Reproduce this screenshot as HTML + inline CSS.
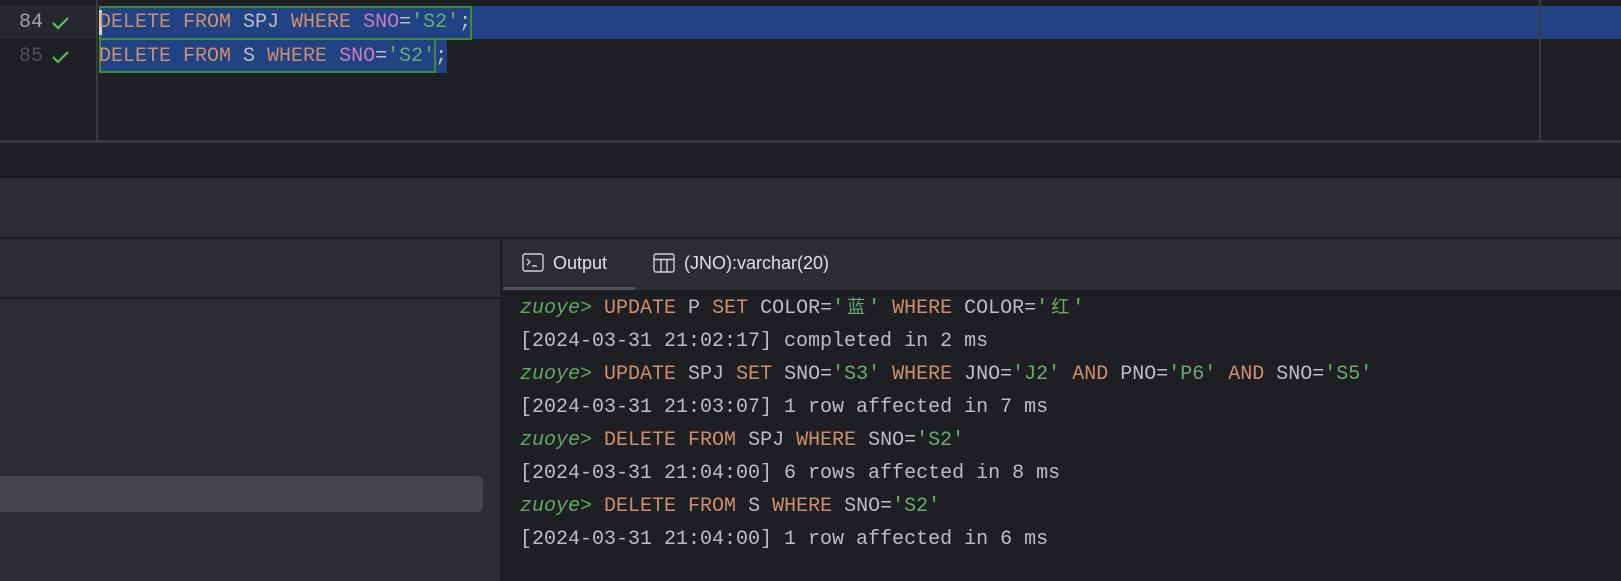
<!DOCTYPE html>
<html><head><meta charset="utf-8"><style>
*{margin:0;padding:0;box-sizing:border-box}
body{width:1621px;height:581px;background:#1e1f22;position:relative;overflow:hidden;font-family:"Liberation Mono",monospace}
.abs{position:absolute}
.m{font-family:"Liberation Mono","Noto Sans CJK SC",monospace;font-size:20px;white-space:pre;color:#bcbec4}
.k{color:#cf8e6d}.s{color:#6aab73}.p{color:#c77dbb}.g{color:#5fa866;font-style:italic}
.cj{display:inline-block;width:24px;text-align:center;font-family:"Noto Sans CJK SC",sans-serif;font-size:18px}
.sans{font-family:"Liberation Sans",sans-serif;font-size:18px;color:#dfe1e5}
</style></head><body>
<!-- editor -->
<div class="abs" style="left:0;top:6px;width:98px;height:33px;background:#26282e"></div>
<div class="abs" style="left:99px;top:6px;width:1522px;height:33px;background:#214283"></div>
<div class="abs" style="left:99px;top:39px;width:348px;height:34px;background:#214283"></div>
<div class="abs" style="left:99px;top:6px;width:373px;height:34px;border:2px solid #3f8a3a"></div>
<div class="abs" style="left:99px;top:39px;width:337px;height:34px;border:2px solid #3f8a3a;border-top:none"></div>
<div class="abs" style="left:96px;top:0;width:2px;height:143px;background:#393b40"></div>
<div class="abs" style="left:1539px;top:0;width:2px;height:143px;background:#393b40"></div>
<div class="abs" style="left:99px;top:10px;width:3px;height:25px;background:#ced0d6"></div>
<div class="abs m" style="left:19px;top:11px;color:#a1a3ab">84</div>
<div class="abs m" style="left:19px;top:45px;color:#4b5059">85</div>
<svg class="abs" style="left:51px;top:15px" width="19" height="52"><path d="M2 8l5 5L17 3M2 42l5 5L17 37" stroke="#5fb865" stroke-width="2.2" fill="none"/></svg>
<div class="abs m" style="left:99px;top:11px"><span class="k">DELETE FROM</span> SPJ <span class="k">WHERE</span> <span class="p">SNO</span>=<span class="s">'S2'</span>;</div>
<div class="abs m" style="left:99px;top:45px"><span class="k">DELETE FROM</span> S <span class="k">WHERE</span> <span class="p">SNO</span>=<span class="s">'S2'</span>;</div>
<div class="abs" style="left:0;top:140px;width:1621px;height:3px;background:#393b40"></div>
<!-- middle bar -->
<div class="abs" style="left:0;top:178px;width:1621px;height:59px;background:#2b2d30"></div>
<div class="abs" style="left:0;top:237px;width:1621px;height:2px;background:#1e1f22"></div>
<!-- left panel -->
<div class="abs" style="left:0;top:239px;width:502px;height:342px;background:#2b2d30"></div>
<div class="abs" style="left:0;top:297px;width:502px;height:2px;background:#1e1f22"></div>
<div class="abs" style="left:0;top:476px;width:483px;height:36px;background:#43454a;border-radius:0 6px 6px 0"></div>
<div class="abs" style="left:500px;top:239px;width:3px;height:342px;background:#1e1f22"></div>
<!-- output header -->
<div class="abs" style="left:503px;top:239px;width:1118px;height:51px;background:#2b2d30"></div>
<div class="abs" style="left:503px;top:287px;width:132px;height:3px;background:#4e5157"></div>
<svg class="abs" style="left:522px;top:253px" width="22" height="20"><rect x="1" y="1" width="20" height="17" rx="2" fill="none" stroke="#ced0d6" stroke-width="1.4"/><path d="M5 6l3 3-3 3M10 13h5" stroke="#ced0d6" stroke-width="1.4" fill="none"/></svg>
<div class="abs sans" style="left:553px;top:253px">Output</div>
<svg class="abs" style="left:653px;top:253px" width="22" height="20"><rect x="1" y="1" width="20" height="18" rx="2" fill="none" stroke="#ced0d6" stroke-width="1.4"/><path d="M1 6.5h20M8 6.5v12M14 6.5v12" stroke="#ced0d6" stroke-width="1.4"/></svg>
<div class="abs sans" style="left:684px;top:253px">(JNO):varchar(20)</div>
<!-- output -->
<div class="abs m" style="left:520px;top:290px;line-height:33px"><span class="g">zuoye&gt;</span> <span class="k">UPDATE</span> P <span class="k">SET</span> COLOR=<span class="s">'<span class="cj">蓝</span>'</span> <span class="k">WHERE</span> COLOR=<span class="s">'<span class="cj">红</span>'</span>
[2024-03-31 21:02:17] completed in 2 ms
<span class="g">zuoye&gt;</span> <span class="k">UPDATE</span> SPJ <span class="k">SET</span> SNO=<span class="s">'S3'</span> <span class="k">WHERE</span> JNO=<span class="s">'J2'</span> <span class="k">AND</span> PNO=<span class="s">'P6'</span> <span class="k">AND</span> SNO=<span class="s">'S5'</span>
[2024-03-31 21:03:07] 1 row affected in 7 ms
<span class="g">zuoye&gt;</span> <span class="k">DELETE FROM</span> SPJ <span class="k">WHERE</span> SNO=<span class="s">'S2'</span>
[2024-03-31 21:04:00] 6 rows affected in 8 ms
<span class="g">zuoye&gt;</span> <span class="k">DELETE FROM</span> S <span class="k">WHERE</span> SNO=<span class="s">'S2'</span>
[2024-03-31 21:04:00] 1 row affected in 6 ms</div>
</body></html>
